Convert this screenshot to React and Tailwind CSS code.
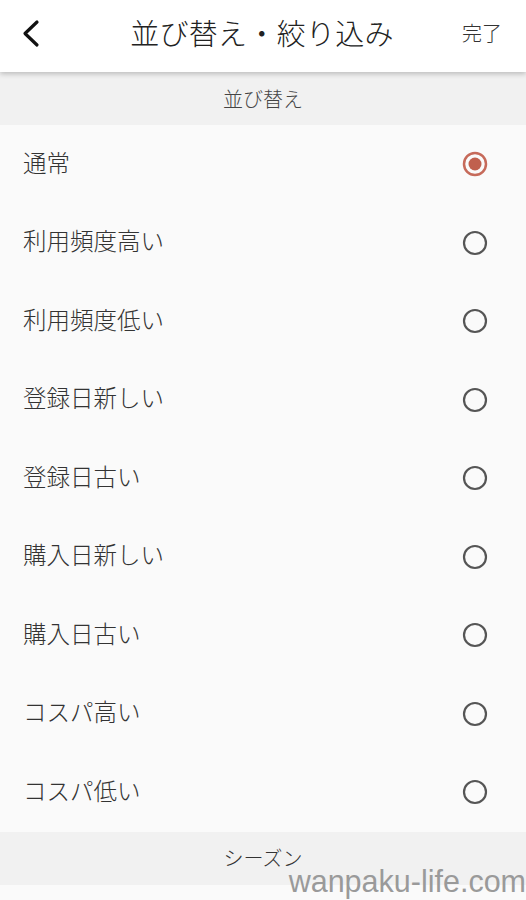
import React from "react";

const items = [
  "通常",
  "利用頻度高い",
  "利用頻度低い",
  "登録日新しい",
  "登録日古い",
  "購入日新しい",
  "購入日古い",
  "コスパ高い",
  "コスパ低い",
];

function Radio({ on }) {
  return (
    <svg width="28" height="28" viewBox="0 0 28 28">
      {on ? (
        <>
          <circle cx="14" cy="14" r="11" fill="none" stroke="#c66a5a" strokeWidth="2.5" />
          <circle cx="14" cy="14" r="6.5" fill="#c0604e" />
        </>
      ) : (
        <circle cx="14" cy="14" r="11" fill="none" stroke="#555" strokeWidth="2.2" />
      )}
    </svg>
  );
}

export default function App() {
  return (
    <div
      className="relative w-[526px] h-[900px] overflow-hidden bg-[#fafafa] text-[#333] font-light"
      style={{ fontFamily: '"Noto Sans CJK JP", "Noto Sans", sans-serif' }}
    >
      <div className="relative z-10 h-[72px] bg-white flex items-center justify-between pl-[20px] pr-[24px] pb-[7px] shadow-[0_2px_5px_rgba(0,0,0,0.22)]">
        <svg width="24" height="30" viewBox="0 0 24 30">
          <path d="M17 4 L5 15.5 L17 27" fill="none" stroke="#111" strokeWidth="3.2" strokeLinecap="round" strokeLinejoin="round" />
        </svg>
        <div className="absolute left-0 right-0 top-0 h-[72px] pb-[7px] flex items-center justify-center pointer-events-none">
          <span className="text-[29px] text-[#222] tracking-[0.3px] pr-[2px]">並び替え・絞り込み</span>
        </div>
        <span className="text-[20px] text-[#333]">完了</span>
      </div>
      <div className="h-[53px] bg-[#f1f1f1] flex items-center justify-center text-[20px] text-[#444]">
        並び替え
      </div>
      <div className="flex flex-col">
        {items.map((t, i) => (
          <div key={t} className="h-[78.5px] flex items-center justify-between pl-[23px] pr-[37px]">
            <span className="text-[23.5px] text-[#333] leading-none pb-[4px]">{t}</span>
            <Radio on={i === 0} />
          </div>
        ))}
      </div>
      <div className="h-[53px] bg-[#f1f1f1] flex items-center justify-center text-[20px] text-[#333]">
        シーズン
      </div>
      <div className="absolute right-0 bottom-[-5px] text-[30.5px] text-[#9a9a9a] font-normal" style={{ fontFamily: '"Liberation Sans", Arial, sans-serif' }}>
        wanpaku-life.com
      </div>
    </div>
  );
}
